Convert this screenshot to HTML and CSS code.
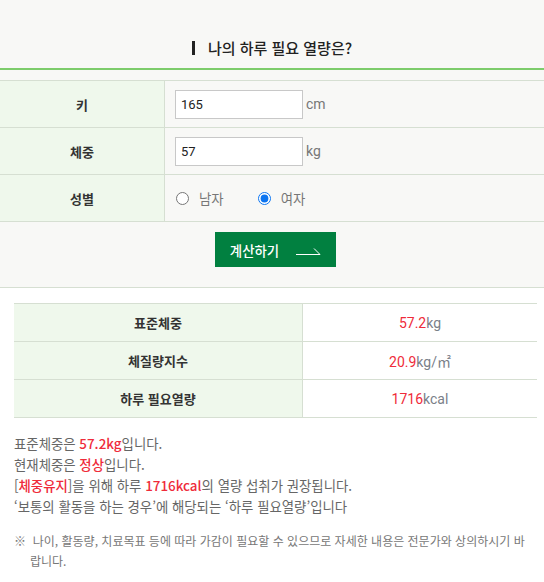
FILE: index.html
```html
<!DOCTYPE html>
<html lang="ko">
<head>
    <meta charset="UTF-8">
    <meta name="viewport" content="width=device-width, initial-scale=1.0">
    <title>하루 필요 열량 계산</title>
    <link rel="stylesheet" href="styles.css">
</head>
<body>
    <div class="calc-box">
        <h2 class="calc-title"><span class="title-bar"></span>나의 하루 필요 열량은?</h2>

        <form id="calc-form" class="calc-form">
            <div class="form-row">
                <div class="form-label">키</div>
                <div class="form-field">
                    <input type="text" id="height" name="height" value="165">
                    <span class="unit">cm</span>
                </div>
            </div>
            <div class="form-row">
                <div class="form-label">체중</div>
                <div class="form-field">
                    <input type="text" id="weight" name="weight" value="57">
                    <span class="unit">kg</span>
                </div>
            </div>
            <div class="form-row">
                <div class="form-label">성별</div>
                <div class="form-field">
                    <label class="radio"><input type="radio" name="sex" value="m"> 남자</label>
                    <label class="radio"><input type="radio" name="sex" value="f" checked> 여자</label>
                </div>
            </div>

            <div class="btn-wrap">
                <button type="submit" class="calc-btn">계산하기
                    <svg width="26" height="8" viewBox="0 0 26 8"><path d="M0 7.5H24L18 1.5" fill="none" stroke="#fff" stroke-width="1"/></svg>
                </button>
            </div>
        </form>
    </div>

    <div class="result">
        <table class="result-table">
            <tr>
                <th>표준체중</th>
                <td><em>57.2</em>kg</td>
            </tr>
            <tr>
                <th>체질량지수</th>
                <td><em>20.9</em>kg/㎡</td>
            </tr>
            <tr>
                <th>하루 필요열량</th>
                <td><em>1716</em>kcal</td>
            </tr>
        </table>

        <p class="result-text">
            표준체중은 <strong>57.2kg</strong>입니다.<br>
            현재체중은 <strong>정상</strong>입니다.<br>
            [<strong>체중유지</strong>]을 위해 하루 <strong>1716kcal</strong>의 열량 섭취가 권장됩니다.<br>
            ‘보통의 활동을 하는 경우’에 해당되는 ‘하루 필요열량’입니다
        </p>

        <p class="note">※&nbsp;&nbsp;나이, 활동량, 치료목표 등에 따라 가감이 필요할 수 있으므로 자세한 내용은 전문가와 상의하시기 바랍니다.</p>
    </div>
</body>
</html>
```

FILE: styles.css
```css
body {
    margin: 0;
    font-family: Roboto, "Noto Sans CJK KR", sans-serif;
    color: #333;
    background-color: #fff;
}

.calc-box {
    background-color: #f8f8f6;
    border-bottom: 1px solid #d6dfd2;
}

.calc-title {
    margin: 0;
    padding: 37px 0 9px;
    border-bottom: 2px solid #7dcc6b;
    font-family: "Noto Sans CJK KR", sans-serif;
    font-size: 15px;
    font-weight: 500;
    line-height: 22px;
    text-align: center;
    color: #222;
}

.title-bar {
    display: inline-block;
    width: 3px;
    height: 14px;
    margin-right: 13px;
    vertical-align: -1px;
    background-color: #222;
}

.calc-form {
    margin-top: 10px;
    border-top: 1px solid #d6dfd2;
}

.form-row {
    display: flex;
    height: 46px;
    border-bottom: 1px solid #d6dfd2;
}

.form-label {
    width: 164px;
    border-right: 1px solid #d6dfd2;
    background-color: #eff8ec;
    display: flex;
    align-items: center;
    justify-content: center;
    font-family: "Noto Sans CJK KR", sans-serif;
    font-size: 13px;
    font-weight: 700;
    color: #333;
}

.form-field {
    flex: 1;
    display: flex;
    align-items: center;
    padding-left: 10px;
}

.form-field input[type="text"] {
    width: 128px;
    height: 29px;
    box-sizing: border-box;
    padding: 0 5px;
    border: 1px solid #c8c8c8;
    background-color: #fff;
    font-family: Roboto, sans-serif;
    font-size: 13px;
    color: #222;
    outline: none;
}

.unit {
    margin-left: 3px;
    font-size: 14px;
    color: #777;
}

.radio {
    display: flex;
    align-items: center;
    margin-right: 33px;
    font-family: "Noto Sans CJK KR", sans-serif;
    font-size: 13.4px;
    color: #777;
}

.radio input {
    width: 13px;
    height: 13px;
    margin: 0 10px 0 1px;
    accent-color: #0b74f0;
}

.btn-wrap {
    display: flex;
    justify-content: center;
    padding: 10px 0 20px;
}

.calc-btn {
    display: flex;
    align-items: center;
    justify-content: center;
    gap: 17px;
    width: 121px;
    height: 35px;
    margin-left: 6px;
    padding: 0 0 0 2px;
    border: none;
    background-color: #018040;
    color: #fff;
    font-family: "Noto Sans CJK KR", sans-serif;
    font-size: 13.4px;
    font-weight: 500;
    cursor: pointer;
}

.calc-btn svg {
    margin-top: 2px;
}

.result {
    padding: 15px 0 0 14px;
}

.result-table {
    width: 523px;
    border-collapse: collapse;
    border-top: 1px solid #d6dfd2;
}

.result-table th,
.result-table td {
    height: 37px;
    padding: 0;
    border-bottom: 1px solid #d6dfd2;
    text-align: center;
    font-size: 13px;
}

.result-table th {
    width: 288px;
    border-right: 1px solid #d6dfd2;
    background-color: #eff8ec;
    font-family: "Noto Sans CJK KR", sans-serif;
    font-weight: 700;
    color: #333;
}

.result-table td {
    font-size: 14px;
    color: #7a8088;
}

.result-table em {
    font-style: normal;
    color: #ef2b3a;
}

.result-text {
    margin: 15px 0 0;
    font-family: "Noto Sans CJK KR", sans-serif;
    font-size: 13.4px;
    line-height: 21px;
    color: #666;
}

.result-text strong {
    font-weight: 500;
    color: #ef2b3a;
}

.note {
    margin: 14px 12px 0 0;
    padding-left: 16px;
    text-indent: -16px;
    font-family: "Noto Sans CJK KR", sans-serif;
    font-size: 12px;
    line-height: 20px;
    color: #777;
}
```
